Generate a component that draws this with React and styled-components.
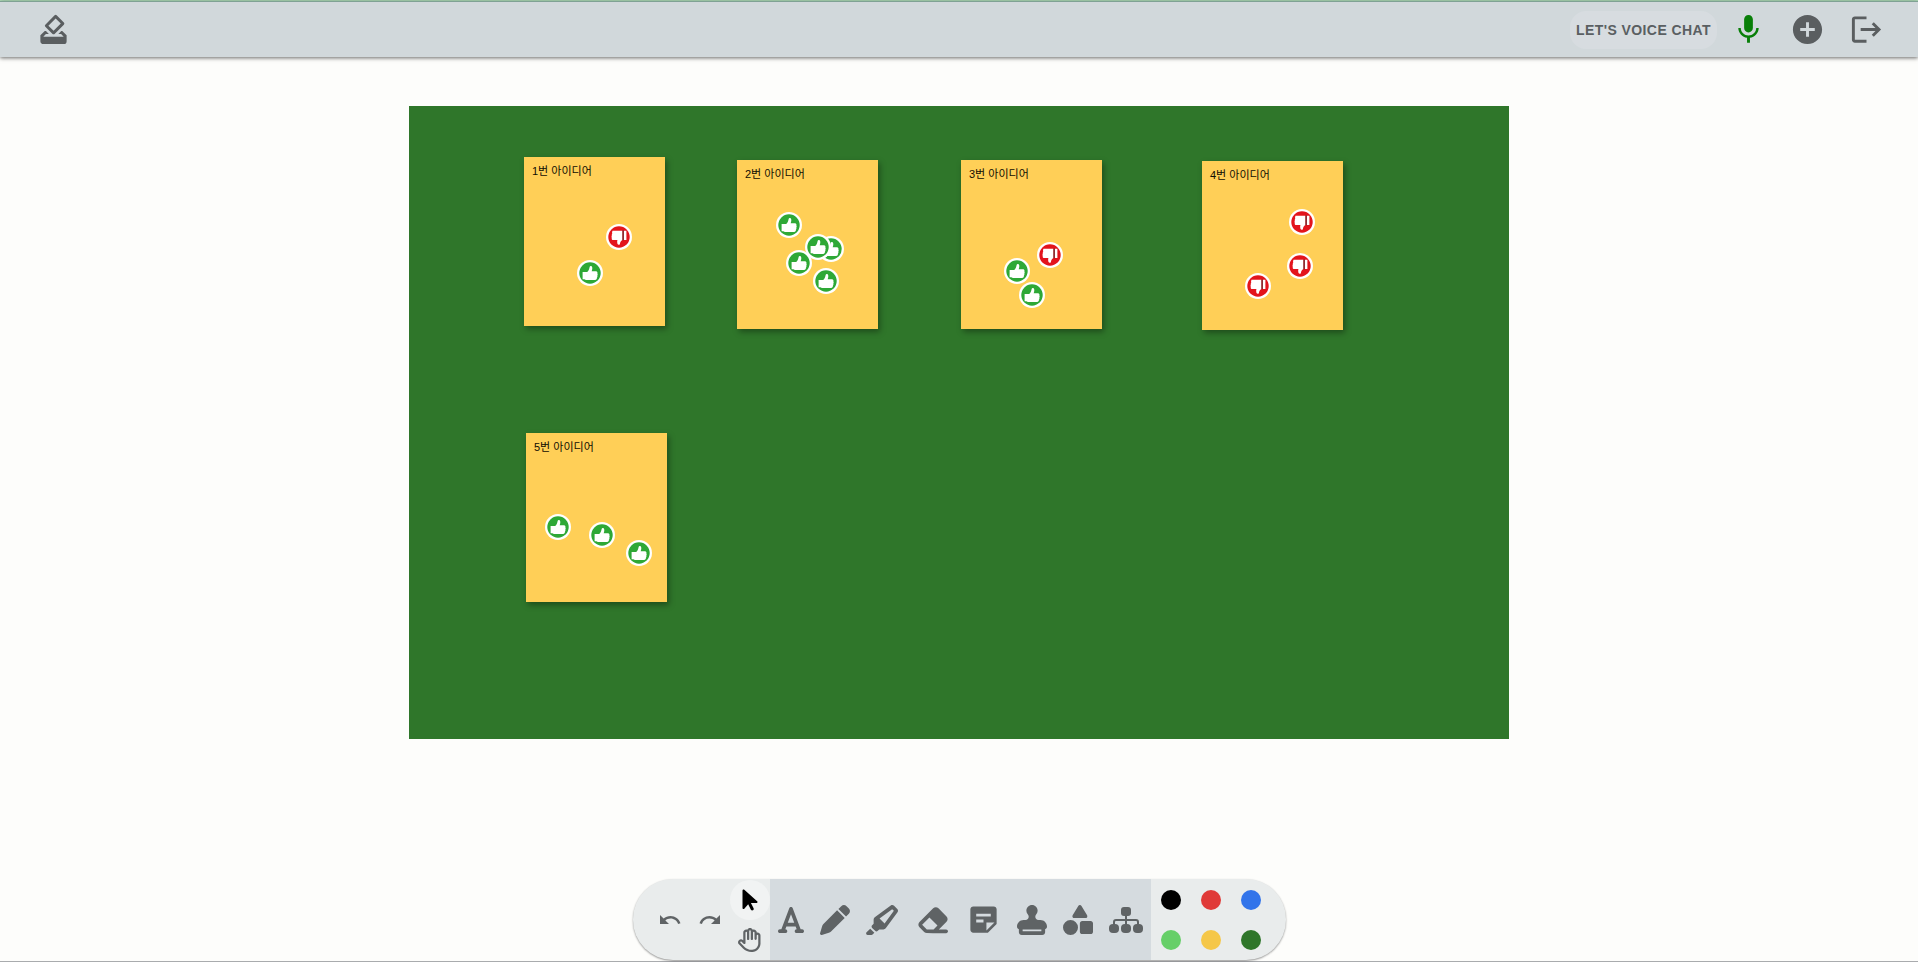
import React from "react";
import styled, { createGlobalStyle } from "styled-components";
import { MdHowToVote, MdMic, MdAddCircle, MdLogout, MdUndo, MdRedo, MdStickyNote2 } from "react-icons/md";
import { FaFont, FaPen, FaHighlighter, FaEraser, FaStamp, FaShapes, FaRegHand, FaArrowPointer } from "react-icons/fa6";

const GlobalStyle = createGlobalStyle`
  *, *::before, *::after { box-sizing: border-box; }
  body {
    margin: 0;
    background: #fdfdfb;
    font-family: "Liberation Sans", "Noto Sans CJK KR", sans-serif;
  }
`;

const Screen = styled.div`
  min-height: 100vh;
  display: flex;
  flex-direction: column;
  border-top: 1px solid #b4e2bd;
  border-bottom: 1px solid #a9abae;
`;

const Header = styled.header`
  height: 56px;
  display: flex;
  align-items: center;
  justify-content: space-between;
  padding: 0 22px 0 24px;
  background: #d1d8db;
  border-top: 1px solid #7fa294;
  box-shadow: 0 1px 4px rgba(0, 0, 0, 0.6);
`;

const Actions = styled.div`
  display: flex;
  align-items: center;
`;

const IconButton = styled.button`
  display: flex;
  padding: 12px;
  border: 0;
  border-radius: 50%;
  background: transparent;
  color: ${(p) => p.$color || "#5a5e60"};
  font-size: 35px;
`;

const VoiceButton = styled.button`
  height: 38px;
  padding: 0 6px;
  margin-right: 2px;
  border: 0;
  border-radius: 16px;
  background: #d7dce0;
  color: #5a5f62;
  font: bold 14px "Liberation Sans", sans-serif;
  letter-spacing: 0.03em;
  text-transform: uppercase;
`;

const Workspace = styled.main`
  flex: 1;
  display: flex;
  justify-content: center;
  align-items: flex-start;
  padding: 49px 24px;
`;

const Board = styled.section`
  position: relative;
  flex: 0 1 1100px;
  height: 633px;
  background: #2f762a;
`;

const Note = styled.article`
  position: absolute;
  left: ${(p) => p.$x}px;
  top: ${(p) => p.$y}px;
  width: 141px;
  height: 169px;
  padding: 6px 8px;
  background: #ffcf57;
  box-shadow: 2px 3px 6px rgba(0, 0, 0, 0.35);
`;

const NoteText = styled.p`
  margin: 0;
  font-size: 11px;
  line-height: 16px;
  color: #100d02;
`;

const Stamp = styled.span`
  position: absolute;
  left: ${(p) => p.$x - 13}px;
  top: ${(p) => p.$y - 13}px;
  width: 26px;
  height: 26px;
  border-radius: 50%;
  background: #fff;
  svg { display: block; width: 26px; height: 26px; }
`;

const Toolbar = styled.footer`
  position: sticky;
  bottom: 1px;
  align-self: center;
  height: 81px;
  margin-bottom: 1px;
  display: flex;
  padding: 0 15px 0 17px;
  border-radius: 40px;
  background: #e9ecec;
  box-shadow: 0 1px 2px rgba(0, 0, 0, 0.4);
`;

const History = styled.div`
  display: flex;
  align-items: center;
`;

const ModeColumn = styled.div`
  display: flex;
  flex-direction: column;
  justify-content: center;
`;

const SmallButton = styled.button`
  width: 40px;
  height: 40px;
  display: flex;
  align-items: center;
  justify-content: center;
  padding: 0;
  border: 0;
  border-radius: 50%;
  background: ${(p) => (p.$active ? "#f1f3f3" : "transparent")};
  color: ${(p) => (p.$active ? "#000" : "#606466")};
  font-size: 24px;
`;

const Tools = styled.div`
  display: flex;
  align-items: center;
  gap: 16px;
  padding: 0 8px;
  background: #d5dbdf;
`;

const ToolButton = styled.button`
  display: flex;
  padding: 0;
  border: 0;
  background: transparent;
  color: #5f6365;
  svg {
    width: ${(p) => p.$width}px;
    height: ${(p) => p.$height || 30}px;
  }
`;

const Palette = styled.div`
  display: grid;
  grid-template-columns: repeat(3, 40px);
  grid-auto-rows: 40px;
  align-content: center;
  place-items: center;
`;

const Swatch = styled.button`
  width: 20px;
  height: 20px;
  padding: 0;
  border: 0;
  border-radius: 50%;
  background: ${(p) => p.$color};
`;

const ThumbUp = () => (
  <svg viewBox="0 0 26 26" aria-hidden="true">
    <circle cx="13" cy="13" r="10.7" fill="#2ea836" />
    <path fill="#fff" d="M5.600 12h4.600c1.500-1.300 2.100-3 2.500-5.200.2-1.100 2.200-1 2.500.4.3 1.500-.1 2.700-.5 4h4.300c1.200 0 1.800 1 1.300 2 .5.800.5 1.700 0 2.400.3.800.1 1.600-.4 2.200.1 1.300-.6 2.200-1.800 2.200H9.200c-.8 0-1.200-.2-1.800-.7H5.600z" />
  </svg>
);

const ThumbDown = () => (
  <svg viewBox="0 0 26 26" aria-hidden="true">
    <circle cx="13" cy="13" r="10.700" fill="#e3141c" />
    <path fill="#fff" d="M6.500 6.800h9.900v9.100c-1.700 1.100-2.200 2.300-2.500 4-.2 1.200-2 1.300-2.500-.2-.4-1.200-.3-2.400 0-3.600H7.300c-1.300 0-1.900-.9-1.500-2.100-.4-.7-.4-1.500 0-2.200-.2-.8-.1-1.500.4-2.100-.3-1-.2-2 .3-2.900zM17.800 6.800h2.600v9.100h-2.600z" />
    <path stroke="#4b2325" strokeWidth="1" d="M17.100 6.500v9.800" />
  </svg>
);

const MindMapIcon = () => (
  <svg viewBox="0 0 34 26" fill="currentColor" aria-hidden="true">
    <rect x="12" y="0" width="10" height="9" rx="3" />
    <rect x="0" y="17" width="10" height="9" rx="4" />
    <rect x="12" y="17" width="10" height="9" rx="4" />
    <rect x="24" y="17" width="10" height="9" rx="4" />
    <path fill="none" stroke="currentColor" strokeWidth="2" d="M17 8v10M5 18v-3q0-2 2-2h20q2 0 2 2v3" />
  </svg>
);

const notes = [
  { text: "1번 아이디어", x: 115, y: 51, stamps: [[95, 80, false], [66, 116, true]] },
  { text: "2번 아이디어", x: 328, y: 54, stamps: [[52, 65, true], [94, 89, true], [81, 87, true], [62, 103, true], [89, 121, true]] },
  { text: "3번 아이디어", x: 552, y: 54, stamps: [[89, 95, false], [56, 111, true], [71, 135, true]] },
  { text: "4번 아이디어", x: 793, y: 55, stamps: [[100, 61, false], [98, 105, false], [56, 125, false]] },
  { text: "5번 아이디어", x: 117, y: 327, stamps: [[32, 94, true], [76, 102, true], [113, 120, true]] },
];

const tools = [
  { label: "Text", Icon: FaFont, width: 26 },
  { label: "Pencil", Icon: FaPen, width: 30 },
  { label: "Highlighter", Icon: FaHighlighter, width: 34 },
  { label: "Eraser", Icon: FaEraser, width: 34 },
  { label: "Sticky note", Icon: MdStickyNote2, width: 35, height: 35 },
  { label: "Stamp", Icon: FaStamp, width: 30 },
  { label: "Shapes", Icon: FaShapes, width: 30 },
  { label: "Mind map", Icon: MindMapIcon, width: 34, height: 26 },
];

const colors = [
  ["Black", "#000"],
  ["Red", "#e03a38"],
  ["Blue", "#3274ea"],
  ["Light green", "#66cf68"],
  ["Yellow", "#f5c748"],
  ["Green", "#2f762a"],
];

export default function App() {
  return (
    <>
      <GlobalStyle />
      <Screen>
        <Header>
          <IconButton aria-label="Vote"><MdHowToVote /></IconButton>
          <Actions>
            <VoiceButton>Let's voice chat</VoiceButton>
            <IconButton aria-label="Microphone" $color="#087f08"><MdMic /></IconButton>
            <IconButton aria-label="Add"><MdAddCircle /></IconButton>
            <IconButton aria-label="Leave"><MdLogout /></IconButton>
          </Actions>
        </Header>
        <Workspace>
          <Board>
            {notes.map((note) => (
              <Note key={note.text} $x={note.x} $y={note.y}>
                <NoteText>{note.text}</NoteText>
                {note.stamps.map(([x, y, up]) => (
                  <Stamp key={`${x}-${y}`} $x={x} $y={y}>
                    {up ? <ThumbUp /> : <ThumbDown />}
                  </Stamp>
                ))}
              </Note>
            ))}
          </Board>
        </Workspace>
        <Toolbar>
          <History>
            <SmallButton aria-label="Undo"><MdUndo /></SmallButton>
            <SmallButton aria-label="Redo"><MdRedo /></SmallButton>
          </History>
          <ModeColumn>
            <SmallButton aria-label="Select" $active><FaArrowPointer /></SmallButton>
            <SmallButton aria-label="Pan"><FaRegHand /></SmallButton>
          </ModeColumn>
          <Tools>
            {tools.map(({ label, Icon, width, height }) => (
              <ToolButton key={label} aria-label={label} $width={width} $height={height}>
                <Icon />
              </ToolButton>
            ))}
          </Tools>
          <Palette>
            {colors.map(([name, color]) => (
              <Swatch key={name} aria-label={name} $color={color} />
            ))}
          </Palette>
        </Toolbar>
      </Screen>
    </>
  );
}
